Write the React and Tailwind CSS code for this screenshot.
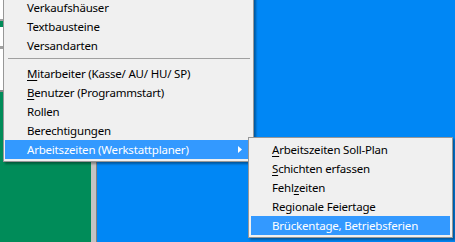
import React from 'react';

const mainItems = [
  { label: 'Verkaufshäuser' },
  { label: 'Textbausteine' },
  { label: 'Versandarten' },
  { sep: true },
  { label: 'itarbeiter (Kasse/ AU/ HU/ SP)', key: 'M' },
  { label: 'enutzer (Programmstart)', key: 'B' },
  { label: 'Rollen' },
  { label: 'Berechtigungen' },
  { label: 'Arbeitszeiten (Werkstattplaner)', active: true, sub: true },
];

const subItems = [
  { pre: '', key: 'A', post: 'rbeitszeiten Soll-Plan' },
  { pre: '', key: 'S', post: 'chichten erfassen' },
  { pre: 'Fehl', key: 'z', post: 'eiten' },
  { pre: 'Regionale Feiertage' },
  { pre: 'Brückentage, Betriebsferien', active: true },
];

function MenuRow({ active, children, className = '' }) {
  return (
    <div
      className={`flex items-center h-[19px] leading-[19px] whitespace-nowrap ${className}
        ${active ? 'bg-[#3399ff] text-white' : 'text-black'}`}
    >
      {children}
    </div>
  );
}

export default function App() {
  return (
    <div className="relative w-[455px] h-[242px] overflow-hidden font-['Segoe_UI','Noto_Sans',sans-serif] text-[11.5px] tracking-[-0.2px]">
      {/* desktop behind the menus */}
      <div className="flex h-full">
        <div className="flex flex-col w-[91px]">
          <div className="h-[90px] bg-white flex flex-col">
            <div className="h-[19px]" />
            <div className="h-[2px] bg-[#a0a0a0]" />
            <div className="h-[6px] bg-[#008c59]" />
            <div className="h-[19px]" />
            <div className="h-[3px] bg-[#a0a0a0]" />
          </div>
          <div className="h-[2px] bg-[#8a8a8a]" />
          <div className="flex-1 bg-[#008c59]" />
        </div>
        <div className="w-[5px] bg-[#c3c3c3]" />
        <div className="w-[1px] bg-[#808080]" />
        <div className="flex-1 bg-[#0087f5]" />
      </div>

      {/* main menu */}
      <div className="absolute left-[3px] top-[-5px] w-[251px] bg-[#f0f0f0] border border-[#979797] px-[1px] py-[2px] shadow-[2px_2px_2px_rgba(0,0,0,0.35)]">
        {mainItems.map((item, i) =>
          item.sep ? (
            <div key={i} className="h-[9px] pt-[3px] pl-[3px] pr-[2px]">
              <div className="h-[1px] bg-[#a0a0a0]" />
            </div>
          ) : (
            <MenuRow key={i} active={item.active} className="pl-[22px] pr-[10px] justify-between">
              <span>
                {item.key && <span className="underline underline-offset-2">{item.key}</span>}
                {item.label}
              </span>
              {item.sub && (
                <svg width="4" height="7" viewBox="0 0 4 7">
                  <path d="M0 0 L4 3.5 L0 7 Z" fill="#fff" />
                </svg>
              )}
            </MenuRow>
          )
        )}
      </div>

      {/* submenu */}
      <div className="absolute left-[248px] top-[137px] w-[205px] bg-[#f0f0f0] border border-[#979797] px-[2px] py-[2px] shadow-[2px_2px_2px_rgba(0,0,0,0.35)]">
        {subItems.map((item, i) => (
          <MenuRow key={i} active={item.active} className="pl-[21px]">
            <span>
              {item.pre}
              {item.key && <span className="underline underline-offset-2">{item.key}</span>}
              {item.post}
            </span>
          </MenuRow>
        ))}
      </div>
    </div>
  );
}
